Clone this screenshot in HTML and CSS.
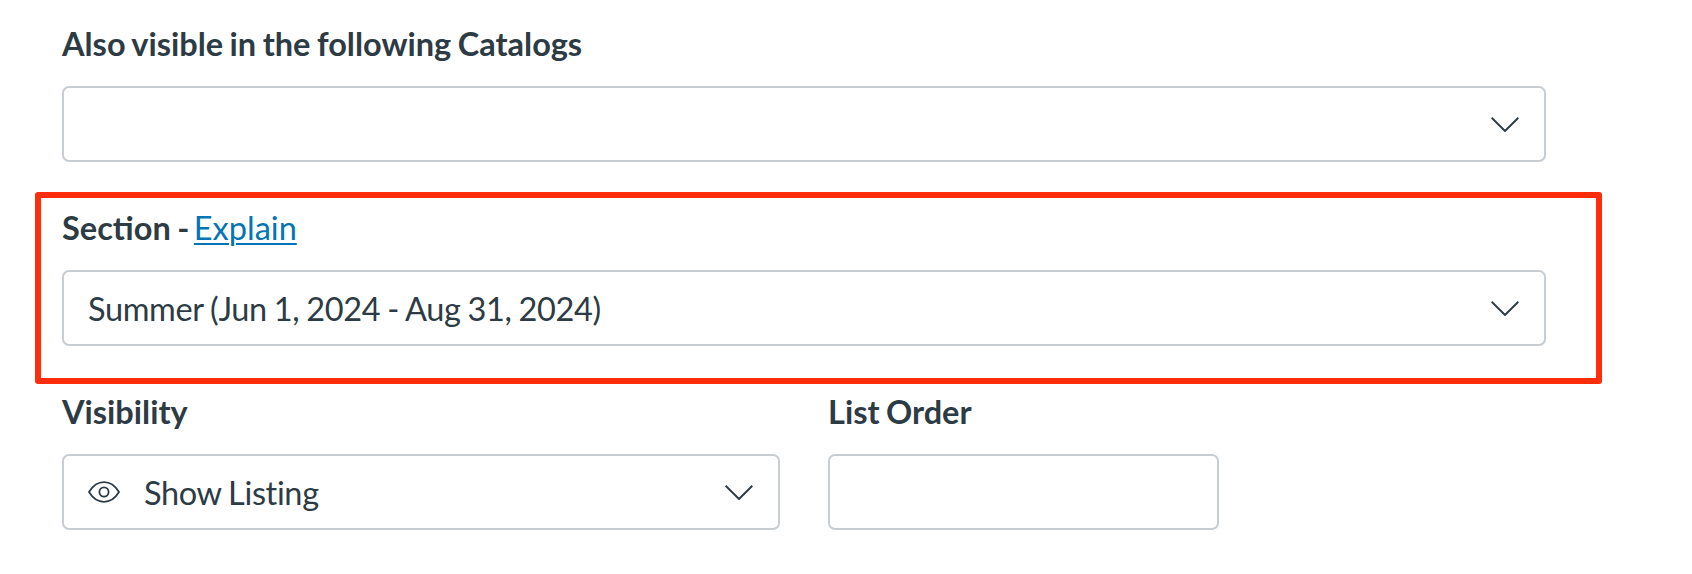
FILE: index.html
```html
<!DOCTYPE html>
<html lang="en">
<head>
<meta charset="utf-8">
<title>Catalog listing settings</title>
<link rel="stylesheet" href="styles.css">
</head>
<body>
<main class="form">
  <div class="field field-top">
    <div class="label">Also visible in the following Catalogs</div>
    <div class="select">
      <span class="value"></span>
      <svg class="chevron" viewBox="0 0 28 15" aria-hidden="true"><path d="M0.6 0.8 14 14 27.4 0.8"/></svg>
    </div>
  </div>
  <div class="highlight">
    <div class="label">Section - <a class="link" href="#">Explain</a></div>
    <div class="select">
      <span class="value">Summer (Jun 1, 2024 - Aug 31, 2024)</span>
      <svg class="chevron" viewBox="0 0 28 15" aria-hidden="true"><path d="M0.6 0.8 14 14 27.4 0.8"/></svg>
    </div>
  </div>
  <div class="row">
    <div class="field vis">
      <div class="label">Visibility</div>
      <div class="select">
        <svg class="eye" viewBox="0 0 32 22" aria-hidden="true"><path d="M1 11C5 4.5 10 1.2 16 1.2S27 4.5 31 11C27 17.5 22 20.8 16 20.8S5 17.5 1 11Z"/><circle cx="16" cy="11" r="4.6"/></svg>
        <span class="value">Show Listing</span>
        <svg class="chevron" viewBox="0 0 28 15" aria-hidden="true"><path d="M0.6 0.8 14 14 27.4 0.8"/></svg>
      </div>
    </div>
    <div class="field order">
      <div class="label">List Order</div>
      <div class="select"></div>
    </div>
  </div>
</main>
</body>
</html>
```

FILE: styles.css
```css
* { box-sizing: border-box; }
html, body { margin: 0; background: #fff; }
body { font-family: Lato, "Open Sans", sans-serif; color: #2d3b45; }
.form { width: 1692px; height: 574px; padding: 26px 0 0 35px; overflow: hidden; }
.field-top { padding-left: 27px; width: 1511px; margin-bottom: 30px; }
.label { font-size: 32.5px; font-weight: 700; line-height: 36px; margin-bottom: 24px; word-spacing: -1.4px; }
.link { color: #0374b5; font-weight: 400; margin-left: -2px; text-decoration: underline; text-decoration-thickness: 2px; text-underline-offset: 3px; }
.select {
  height: 76px; border: 2px solid #c7cdd1; border-radius: 7px; background: #fff;
  display: flex; align-items: center; padding: 0 25px 0 24px;
}
.value { font-size: 32.5px; line-height: 36px; flex: 1; padding-top: 2px; word-spacing: -1px; letter-spacing: -0.35px; }
.chevron { width: 28px; height: 15px; flex: none; }
.chevron path { fill: none; stroke: #2d3b45; stroke-width: 2; }
.highlight { width: 1567px; height: 192px; border: 6px solid #ff2d0a; border-radius: 3px; padding: 12px 50px 0 21px; }
.row { display: flex; padding: 0 0 0 27px; margin-top: 10px; }
.vis { width: 718px; margin-right: 48px; }
.order { width: 391px; }
.eye { width: 32px; height: 22px; flex: none; margin-right: 24px; }
.eye path, .eye circle { fill: none; stroke: #2d3b45; stroke-width: 1.8; }
```
